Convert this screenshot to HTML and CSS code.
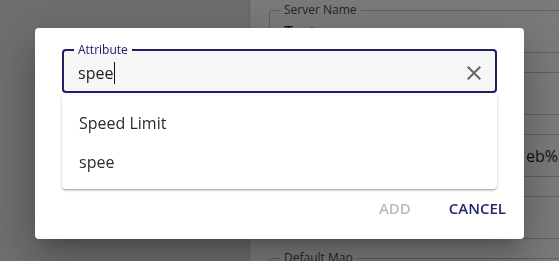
FILE: index.html
```html
<!DOCTYPE html>
<html lang="en">
<head>
<meta charset="utf-8">
<title>Add attribute</title>
<link rel="stylesheet" href="styles.css">
</head>
<body>
<div class="page">
  <aside class="sidebar"></aside>
  <main class="main">
    <fieldset class="bg-field"><legend>Server Name</legend><div class="bg-value">Test</div></fieldset>
    <fieldset class="bg-field"><legend>Server Port</legend><div class="bg-value">8080</div></fieldset>
    <fieldset class="bg-field"><legend>Tile Layer</legend><div class="bg-value"><span class="bg-pre">https://tiles.example.org/w</span>eb%</div></fieldset>
    <fieldset class="bg-field"><legend>Tile Size</legend><div class="bg-value">256</div></fieldset>
    <fieldset class="bg-field"><legend>Default Map</legend><div class="bg-value">OSM</div></fieldset>
  </main>
</div>

<div class="backdrop">
  <div class="dialog" role="dialog">
    <div class="dialog-content">
      <div class="ac">
        <fieldset class="ac-field">
          <legend>Attribute</legend>
          <div class="ac-row">
            <span class="ac-text">spee</span><span class="caret"></span>
            <span class="grow"></span>
            <svg class="clear" viewBox="0 0 24 24" width="24" height="24" aria-hidden="true">
              <path d="M19 6.41 17.59 5 12 10.59 6.41 5 5 6.41 10.59 12 5 17.59 6.41 19 12 13.41 17.59 19 19 17.59 13.41 12z"/>
            </svg>
          </div>
        </fieldset>
        <ul class="listbox">
          <li>Speed Limit</li>
          <li>spee</li>
        </ul>
      </div>
    </div>
    <div class="dialog-actions">
      <button class="btn btn-disabled">ADD</button>
      <button class="btn btn-primary">CANCEL</button>
    </div>
  </div>
</div>
</body>
</html>
```

FILE: styles.css
```css
* { box-sizing: border-box; }

html, body {
  margin: 0;
  height: 100%;
  overflow: hidden;
  font-family: "Open Sans", "Noto Sans", sans-serif;
}

.page {
  display: grid;
  grid-template-columns: 250px 1fr;
  height: 100vh;
}

.sidebar {
  background: #dcdcdc;
  border-right: 1px solid #c8c8c8;
}

.main {
  background: #f4f4f4;
  padding: 3px 0 0 19px;
  overflow: hidden;
}

.bg-field {
  width: 360px;
  height: 50px;
  margin: 0 0 12px;
  padding: 0 14px;
  border: 1px solid #bdbdbd;
  border-radius: 4px;
}

.bg-field legend {
  font-size: 12px;
  line-height: 14px;
  padding: 0 4px;
  margin-left: -4px;
  color: #4a4a4a;
}

.bg-value {
  margin-top: 4px;
  font-size: 16px;
  line-height: 22px;
  color: #1e1e1e;
  white-space: nowrap;
}

.bg-pre {
  display: inline-block;
  width: 242px;
  overflow: hidden;
  vertical-align: bottom;
  color: transparent;
}

.backdrop {
  position: fixed;
  inset: 0;
  background: rgba(0, 0, 0, 0.5);
  display: flex;
  justify-content: center;
  align-items: flex-start;
  padding-top: 28px;
}

.dialog {
  width: 489px;
  background: #fff;
  border-radius: 4px;
  box-shadow: 0 11px 15px -7px rgba(0,0,0,.2), 0 24px 38px 3px rgba(0,0,0,.14), 0 9px 46px 8px rgba(0,0,0,.12);
}

.dialog-content {
  height: 162px;
  padding: 15px 27px 0;
}

.ac {
  position: relative;
}

.ac-field {
  margin: 0;
  height: 50px;
  padding: 0 9px 0 14px;
  border: 2px solid #1d2160;
  border-radius: 4px;
  background: #f6f6f6;
}

.ac-field legend {
  font-size: 12px;
  line-height: 14px;
  padding: 0 4px;
  margin-left: -4px;
  color: #1d2160;
}

.ac-row {
  display: flex;
  align-items: center;
  height: 31px;
}

.ac-text {
  font-size: 16px;
  line-height: 24px;
  color: #222;
}

.caret {
  width: 1px;
  height: 22px;
  background: #111;
  margin-left: 1px;
}

.grow { flex: 1; }

.clear {
  fill: #666;
  display: block;
}

.listbox {
  position: absolute;
  top: calc(100% + 2px);
  left: 0;
  right: 0;
  margin: 0;
  padding: 8px 0;
  list-style: none;
  background: #fff;
  border-radius: 4px;
  box-shadow: 0 2px 2px -1px rgba(0,0,0,.22), 0 1px 2px 0 rgba(0,0,0,.14), 0 1px 4px 0 rgba(0,0,0,.12);
}

.listbox li {
  padding: 7.5px 17px;
  font-size: 16px;
  line-height: 24px;
  color: #2b2b2b;
}

.dialog-actions {
  display: flex;
  justify-content: flex-end;
  padding: 0 10px 12px;
}

.btn {
  font-family: inherit;
  font-size: 15px;
  font-weight: 600;
  height: 37px;
  line-height: 37px;
  padding: 0 8px;
  border: 0;
  background: none;
  margin-left: 22px;
}

.btn-disabled { color: #bdbdbd; }
.btn-primary { color: #23286b; }
```
